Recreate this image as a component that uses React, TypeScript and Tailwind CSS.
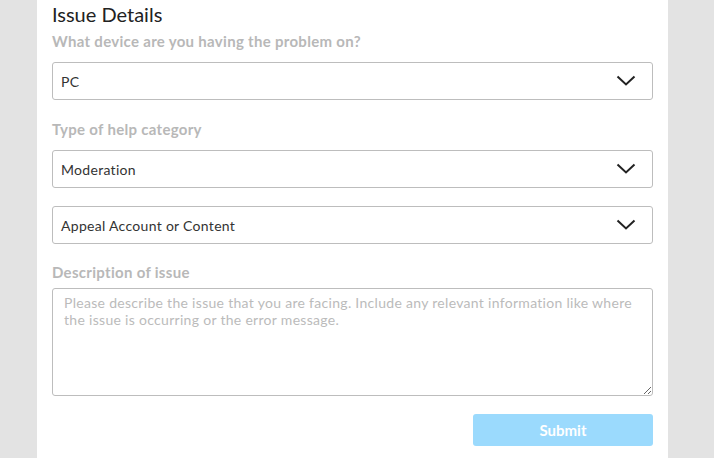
import React from 'react';

const font = { fontFamily: 'Lato, "Open Sans", Arial, sans-serif' };

function Chevron() {
  return (
    <svg width="20" height="12" viewBox="0 0 20 12" className="shrink-0">
      <path d="M1.5 1.5 L10 9.5 L18.5 1.5" fill="none" stroke="#222" strokeWidth="2" />
    </svg>
  );
}

function SelectBox({ value, className }: { value: string; className: string }) {
  return (
    <div
      className={
        'flex h-[38px] items-center justify-between rounded-[3px] border border-[#bdbdbd] bg-white pl-[8px] pr-[16px] ' +
        className
      }
    >
      <span className="text-[14px] tracking-[0.3px] text-[#333]">{value}</span>
      <Chevron />
    </div>
  );
}

export default function App() {
  return (
    <div className="flex h-[458px] w-[714px] bg-[#e3e3e3]" style={font}>
      <div className="ml-[37px] flex w-[631px] flex-col bg-white px-[15px] pt-[2px]">
        <h1 className="h-[24px] text-[20px] leading-[24px] text-[#222]">Issue Details</h1>
        <div className="mt-[6px] text-[15px] font-bold leading-[18px] tracking-[0.3px] text-[#b8b8b8]">
          What device are you having the problem on?
        </div>
        <SelectBox value="PC" className="mt-[12px]" />

        <div className="mt-[20px] text-[15px] font-bold leading-[18px] tracking-[0.3px] text-[#b8b8b8]">
          Type of help category
        </div>
        <SelectBox value="Moderation" className="mt-[12px]" />
        <SelectBox value="Appeal Account or Content" className="mt-[18px]" />

        <div className="mt-[19px] text-[15px] font-bold leading-[18px] tracking-[0.3px] text-[#b8b8b8]">
          Description of issue
        </div>
        <textarea
          className="mt-[7px] h-[108px] w-full rounded-[3px] border border-[#bdbdbd] px-[11px] py-[5px] text-[14px] leading-[17px] tracking-[0.3px] text-[#333] placeholder:text-[#bbb] focus:outline-none"
          style={font}
          placeholder="Please describe the issue that you are facing. Include any relevant information like where the issue is occurring or the error message."
        />
        <div className="mt-[18px] flex justify-end">
          <button className="h-[32px] w-[180px] rounded-[3px] bg-[#9bdafd] text-[15px] font-bold text-white">
            Submit
          </button>
        </div>
      </div>
    </div>
  );
}
